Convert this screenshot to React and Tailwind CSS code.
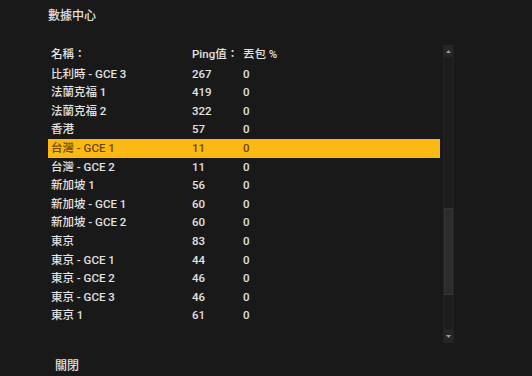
const rows = [
  { name: '比利時 - GCE 3', ping: 267, loss: 0 },
  { name: '法蘭克福 1', ping: 419, loss: 0 },
  { name: '法蘭克福 2', ping: 322, loss: 0 },
  { name: '香港', ping: 57, loss: 0 },
  { name: '台灣 - GCE 1', ping: 11, loss: 0, active: true },
  { name: '台灣 - GCE 2', ping: 11, loss: 0 },
  { name: '新加坡 1', ping: 56, loss: 0 },
  { name: '新加坡 - GCE 1', ping: 60, loss: 0 },
  { name: '新加坡 - GCE 2', ping: 60, loss: 0 },
  { name: '東京', ping: 83, loss: 0 },
  { name: '東京 - GCE 1', ping: 44, loss: 0 },
  { name: '東京 - GCE 2', ping: 46, loss: 0 },
  { name: '東京 - GCE 3', ping: 46, loss: 0 },
  { name: '東京 1', ping: 61, loss: 0 },
];

const Row = ({ name, ping, loss, active }) => (
  <div
    className={
      'flex items-center h-[18.6px] pl-[3px] ' +
      (active ? 'bg-[#fdb913] text-[#6b4800]' : 'text-[#e2e2e2]')
    }
  >
    <span className="w-[141px]">{name}</span>
    <span className="w-[51px]">{ping}</span>
    <span>{loss}</span>
  </div>
);

const Scrollbar = () => (
  <div className="w-[11px] h-[298px] flex flex-col bg-[#1d1d1d] border-x border-[#222]">
    <div className="h-[12px] bg-[#262626] flex items-center justify-center">
      <svg width="5" height="3" viewBox="0 0 5 3">
        <path d="M0 3 L2.5 0 L5 3 Z" fill="#9a9a9a" />
      </svg>
    </div>
    <div className="h-[151px]" />
    <div className="h-[87px] bg-[#2c2c2c] border border-[#353535]" />
    <div className="flex-1" />
    <div className="h-[14px] bg-[#262626] flex items-center justify-center">
      <svg width="5" height="3" viewBox="0 0 5 3">
        <path d="M0 0 L2.5 3 L5 0 Z" fill="#9a9a9a" />
      </svg>
    </div>
  </div>
);

export default function App() {
  return (
    <div
      className="w-[532px] h-[376px] bg-[#191919] text-[#e2e2e2] font-medium overflow-hidden flex flex-col"
      style={{ fontFamily: 'Roboto, "Noto Sans CJK TC", sans-serif' }}
    >
      <div className="pl-[48px] pt-[7px] h-[45px] text-[12px]">數據中心</div>

      <div className="flex pl-[48px] text-[11.5px]">
        <div className="w-[392px]">
          <div className="flex items-center h-[18.6px] pl-[3px] mb-[1.4px]">
            <span className="w-[141px]">名稱：</span>
            <span className="w-[51px]">Ping值：</span>
            <span>丟包 %</span>
          </div>
          {rows.map((r) => (
            <Row key={r.name} {...r} />
          ))}
        </div>
        <div className="ml-[3px]">
          <Scrollbar />
        </div>
      </div>

      <div className="mt-auto pl-[55px] pb-[2px] leading-[16px] text-[12px]">關閉</div>
    </div>
  );
}
